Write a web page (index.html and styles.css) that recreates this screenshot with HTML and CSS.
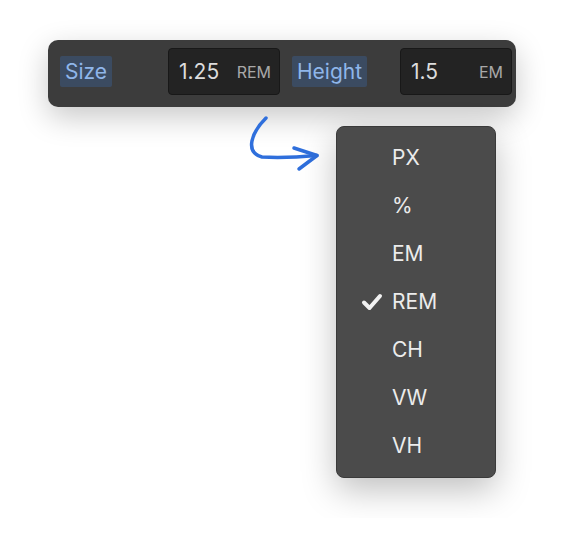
FILE: index.html
```html
<!DOCTYPE html>
<html lang="en">

<head>
    <meta charset="UTF-8">
    <meta name="viewport" content="width=device-width, initial-scale=1.0">
    <title>Units</title>
    <link rel="stylesheet" href="styles.css">
</head>

<body>
    <div class="stage">
        <div class="toolbar">
            <div class="field">
                <span class="label">Size</span>
            </div>
            <div class="input">
                <span class="value">1.25</span>
                <span class="unit">REM</span>
            </div>
            <div class="field">
                <span class="label">Height</span>
            </div>
            <div class="input">
                <span class="value">1.5</span>
                <span class="unit">EM</span>
            </div>
        </div>

        <div class="below">
            <svg class="arrow" width="84" height="64" viewBox="0 0 84 64">
                <path d="M26 8 C12 22 4 42 22 47 C40 48 60 47 77 45.5" />
                <path d="M54 38 L77 45.5 L59 59" />
            </svg>

            <ul class="menu">
                <li>PX</li>
                <li>%</li>
                <li>EM</li>
                <li class="selected">
                    <svg class="check" width="22" height="18" viewBox="0 0 22 18">
                        <path d="M3 9.5 L8.5 15 L19 3" />
                    </svg>
                    REM
                </li>
                <li>CH</li>
                <li>VW</li>
                <li>VH</li>
            </ul>
        </div>
    </div>
</body>

</html>
```

FILE: styles.css
```css
body {
    margin: 0;
    background-color: #fff;
    font-family: Inter, "Liberation Sans", sans-serif;
}

.stage {
    padding: 40px 48px;
}

.toolbar {
    display: flex;
    align-items: center;
    width: 468px;
    box-sizing: border-box;
    padding: 8px 4px 12px 12px;
    background-color: #3c3c3c;
    border-radius: 10px;
    box-shadow: 0 10px 30px rgba(0, 0, 0, 0.22);
}

.field {
    display: flex;
    width: 108px;
}

.input + .field {
    margin-left: 12px;
}

.label {
    padding: 4px 5px;
    font-size: 21px;
    line-height: 23px;
    color: #8fb6ea;
    background-color: #3b4b61;
    border-radius: 2px;
}

.input {
    display: flex;
    align-items: center;
    justify-content: space-between;
    width: 112px;
    height: 47px;
    box-sizing: border-box;
    padding: 0 8px 0 10px;
    background-color: #232323;
    border: 1px solid #181818;
    border-radius: 4px;
}

.value {
    font-size: 21px;
    color: #dcdcdc;
}

.unit {
    font-size: 16px;
    color: #a8a8a8;
}

.below {
    display: flex;
    align-items: flex-start;
    gap: 12px;
    margin: 3px 0 0 192px;
}

.arrow path {
    fill: none;
    stroke: #2f6fdc;
    stroke-width: 3.5;
    stroke-linecap: round;
    stroke-linejoin: round;
}

.menu {
    list-style: none;
    margin: 16px 0 0;
    padding: 7px 0;
    width: 160px;
    box-sizing: border-box;
    background-color: #4b4b4b;
    border: 1px solid #3a3a3a;
    border-radius: 8px;
    box-shadow: 0 12px 34px rgba(0, 0, 0, 0.25);
}

.menu li {
    position: relative;
    height: 48px;
    line-height: 48px;
    padding-left: 55px;
    font-size: 21px;
    color: #ececec;
}

.check {
    position: absolute;
    left: 24px;
    top: 15px;
}

.check path {
    fill: none;
    stroke: #f2f2f2;
    stroke-width: 4;
    stroke-linecap: round;
    stroke-linejoin: round;
}
```
